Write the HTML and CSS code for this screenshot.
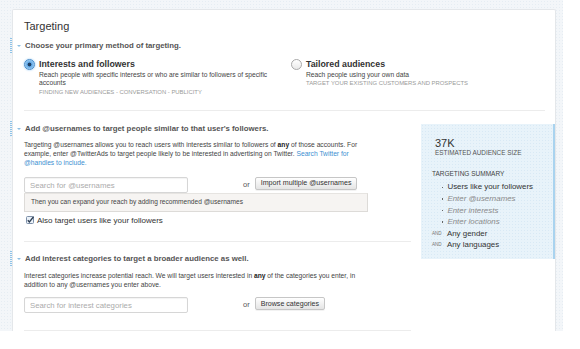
FILE: index.html
```html
<!DOCTYPE html>
<html lang="en">
<head>
    <meta charset="UTF-8">
    <title>Targeting</title>
    <link rel="stylesheet" href="styles.css">
</head>
<body>

    <div class="Fondo">
        <div class="Tarjeta">
            <h1 class="Titulo">Targeting</h1>

            <h2 class="Seccion">Choose your primary method of targeting.</h2>

            <div class="Opciones">
                <div class="Opcion">
                    <span class="Radio Activo"></span>
                    <div class="Opcion-Texto">
                        <div class="Opcion-Nombre">Interests and followers</div>
                        <p class="Opcion-Desc">Reach people with specific interests or who are similar to followers of specific accounts</p>
                        <p class="Etiquetas">FINDING NEW AUDIENCES - CONVERSATION - PUBLICITY</p>
                    </div>
                </div>
                <div class="Opcion">
                    <span class="Radio"></span>
                    <div class="Opcion-Texto">
                        <div class="Opcion-Nombre">Tailored audiences</div>
                        <p class="Opcion-Desc">Reach people using your own data</p>
                        <p class="Etiquetas">TARGET YOUR EXISTING CUSTOMERS AND PROSPECTS</p>
                    </div>
                </div>
            </div>

            <hr class="Linea Larga">

            <div class="Columnas">
                <main class="Principal">
                    <h2 class="Seccion">Add @usernames to target people similar to that user's followers.</h2>
                    <p class="Parrafo">Targeting @usernames allows you to reach users with interests similar to followers of <b>any</b> of those accounts. For example, enter @TwitterAds to target people likely to be interested in advertising on Twitter. <a href="#">Search Twitter for @handles to include.</a></p>

                    <div class="Fila">
                        <input class="Campo" type="text" placeholder="Search for @usernames">
                        <span class="O">or</span>
                        <button class="Boton">Import multiple @usernames</button>
                    </div>
                    <div class="Aviso">Then you can expand your reach by adding recommended @usernames</div>

                    <label class="Marcar">
                        <svg class="Caja" width="8" height="8" viewBox="0 0 8 8">
                            <rect x="0.5" y="0.5" width="7" height="7" rx="1" fill="#eaf1f8" stroke="#7d8fa8"/>
                            <path d="M1.8 4.2 L3.4 6 L7.6 0.6" fill="none" stroke="#2d3d52" stroke-width="1.3"/>
                        </svg>
                        Also target users like your followers
                    </label>

                    <hr class="Linea">

                    <h2 class="Seccion Tercera">Add interest categories to target a broader audience as well.</h2>
                    <p class="Parrafo Corto">Interest categories increase potential reach. We will target users interested in <b>any</b> of the categories you enter, in addition to any @usernames you enter above.</p>

                    <div class="Fila Ultima">
                        <input class="Campo" type="text" placeholder="Search for interest categories">
                        <span class="O">or</span>
                        <button class="Boton">Browse categories</button>
                    </div>

                    <hr class="Linea Final">
                </main>

                <aside class="Resumen">
                    <div class="Numero">37K</div>
                    <div class="Numero-Txt">ESTIMATED AUDIENCE SIZE</div>

                    <div class="Resumen-Titulo">TARGETING SUMMARY</div>
                    <ul class="Lista">
                        <li><span class="Punto"></span>Users like your followers</li>
                        <li class="Vacio"><span class="Punto"></span>Enter @usernames</li>
                        <li class="Vacio"><span class="Punto"></span>Enter interests</li>
                        <li class="Vacio"><span class="Punto"></span>Enter locations</li>
                        <li><span class="Y">AND</span>Any gender</li>
                        <li><span class="Y">AND</span>Any languages</li>
                    </ul>
                </aside>
            </div>
        </div>
    </div>

</body>
</html>
```

FILE: styles.css
```css
body {
    margin: 0;
    font-family: 'Liberation Sans', Arial, sans-serif;
    color: #3a3a3a;
    background: white;
}

.Fondo {
    width: 563px;
    height: 331px;
    padding: 9px 7px 0 12px;
    box-sizing: border-box;
    overflow: hidden;
    background-color: #f3f6f9;
    background-image: radial-gradient(#e6edf3 0.6px, transparent 0.8px);
    background-size: 3px 3px;
}

.Tarjeta {
    height: 100%;
    box-sizing: border-box;
    padding: 10px 0 0 11px;
    background: white;
    border: 1px solid #e4e7ea;
    border-bottom: none;
    border-radius: 2px 2px 0 0;
}

.Titulo {
    margin: 0;
    font-size: 11px;
    line-height: 13px;
    font-weight: normal;
    color: #333;
}

.Seccion {
    position: relative;
    margin: 8px 0 0 1px;
    font-size: 7.8px;
    line-height: 10px;
    font-weight: bold;
    color: #555;
}

/* triangulito azul */
.Seccion::before {
    content: "";
    position: absolute;
    left: -8px;
    top: 4px;
    border-left: 2px solid transparent;
    border-right: 2px solid transparent;
    border-top: 2.5px solid #8dbfe3;
}

/* marca punteada en el borde */
.Seccion::after {
    content: "";
    position: absolute;
    left: -15px;
    top: -3px;
    width: 2px;
    height: 16px;
    background-image: linear-gradient(#8ec3e8 50%, transparent 50%);
    background-size: 2px 2px;
}

.Opciones {
    display: grid;
    grid-template-columns: 267px 1fr;
    margin-top: 7.5px;
}

.Opcion {
    display: flex;
    gap: 4px;
}

.Radio {
    flex: none;
    width: 9px;
    height: 9px;
    margin-top: 0.5px;
    border-radius: 50%;
    border: 1px solid #a9a9a9;
    background: linear-gradient(#fff, #e9e9e9);
}

.Radio.Activo {
    border-color: #4a8dcb;
    background: radial-gradient(#1f3f63 0 1.6px, #5fa6e4 2.2px, #9ccdf3 4.5px);
    box-shadow: 0 0 2px #7fbdf0;
}

.Opcion-Nombre {
    font-size: 8.8px;
    line-height: 11px;
    font-weight: bold;
    color: #333;
    margin-bottom: 1px;
}

.Opcion-Desc {
    margin: 0;
    max-width: 236px;
    font-size: 6.7px;
    line-height: 8.6px;
    color: #444;
}

.Etiquetas {
    margin: 0;
    font-size: 5.9px;
    line-height: 8.6px;
    color: #9a9a9a;
}

.Linea {
    margin: 0;
    height: 0;
    border: none;
    border-top: 1px solid #ececec;
    margin-top: 16px;
    margin-right: 4px;
}

.Linea.Larga {
    margin: 14px 10px 0 0;
}

.Columnas {
    display: flex;
    gap: 6px;
}

.Principal {
    width: 394px;
}

.Principal .Seccion {
    margin-top: 13px;
}

.Principal .Seccion.Tercera {
    margin-top: 11.5px;
}

.Parrafo {
    max-width: 335px;
    margin: 5.8px 0 0;
    font-size: 6.7px;
    line-height: 9px;
    color: #444;
}

.Parrafo.Corto {
    margin-top: 7.2px;
}

.Parrafo b {
    color: #222;
}

.Parrafo a {
    color: #3d8fd1;
    text-decoration: none;
}

.Fila {
    display: flex;
    align-items: flex-start;
    margin-top: 10px;
}

.Fila.Ultima {
    margin-top: 8.3px;
}

.Campo {
    width: 164px;
    height: 16px;
    box-sizing: border-box;
    margin: 0;
    padding: 0 5px;
    font-family: inherit;
    font-size: 7.8px;
    border: 1px solid #d6d6d6;
    border-radius: 2px;
    box-shadow: inset 0 1px 1px rgba(0, 0, 0, 0.05);
    outline: none;
}

.Campo::placeholder {
    color: #ababab;
}

.O {
    margin: 3px 5px 0 55px;
    font-size: 7.5px;
    line-height: 10px;
    color: #555;
}

.Boton {
    height: 12.6px;
    margin: 0;
    padding: 0 5px;
    font-family: inherit;
    font-size: 7.1px;
    line-height: 10px;
    color: #333;
    background: linear-gradient(#ffffff, #e4e4e4);
    border: 1px solid #c6c6c6;
    border-radius: 2px;
    box-shadow: 0 1px 0 rgba(0, 0, 0, 0.05);
    cursor: pointer;
}

.Aviso {
    width: 344px;
    height: 18.7px;
    box-sizing: border-box;
    padding: 0 6px;
    font-size: 6.6px;
    line-height: 16.7px;
    color: #444;
    background: #f6f4f2;
    border: 1px solid #dddbd8;
    border-top-color: #e6e4e1;
}

.Marcar {
    display: flex;
    align-items: center;
    gap: 3px;
    height: 10px;
    margin-top: 3.5px;
    padding-left: 2px;
    font-size: 8px;
    color: #333;
}

.Caja {
    flex: none;
}

.Linea.Final {
    margin-top: 16.3px;
}

.Resumen {
    width: 135px;
    height: 135px;
    box-sizing: border-box;
    margin-top: 13px;
    padding: 12.7px 0 0 11px;
    background-color: #e8f3fa;
    background-image: radial-gradient(#d8e9f5 0.6px, transparent 0.8px);
    background-size: 3px 3px;
    border-right: 2px solid #a9d3ef;
}

.Numero {
    padding-left: 3px;
    font-size: 11px;
    line-height: 12px;
    color: #333;
}

.Numero-Txt {
    padding-left: 3px;
    font-size: 6.4px;
    line-height: 8px;
    color: #555;
}

.Resumen-Titulo {
    margin-top: 13.3px;
    font-size: 6.5px;
    line-height: 8px;
    color: #444;
}

.Lista {
    margin: 2.9px 0 0;
    padding: 0;
    list-style: none;
}

.Lista li {
    display: flex;
    align-items: center;
    height: 11.6px;
    font-size: 7.9px;
    color: #333;
}

.Lista li.Vacio {
    font-style: italic;
    color: #8a8a8a;
}

.Punto {
    width: 1.5px;
    height: 1.5px;
    margin: 1px 4px 0 10px;
    background: #666;
}

.Y {
    width: 15px;
    font-size: 4.6px;
    color: #777;
    font-style: normal;
}
```
